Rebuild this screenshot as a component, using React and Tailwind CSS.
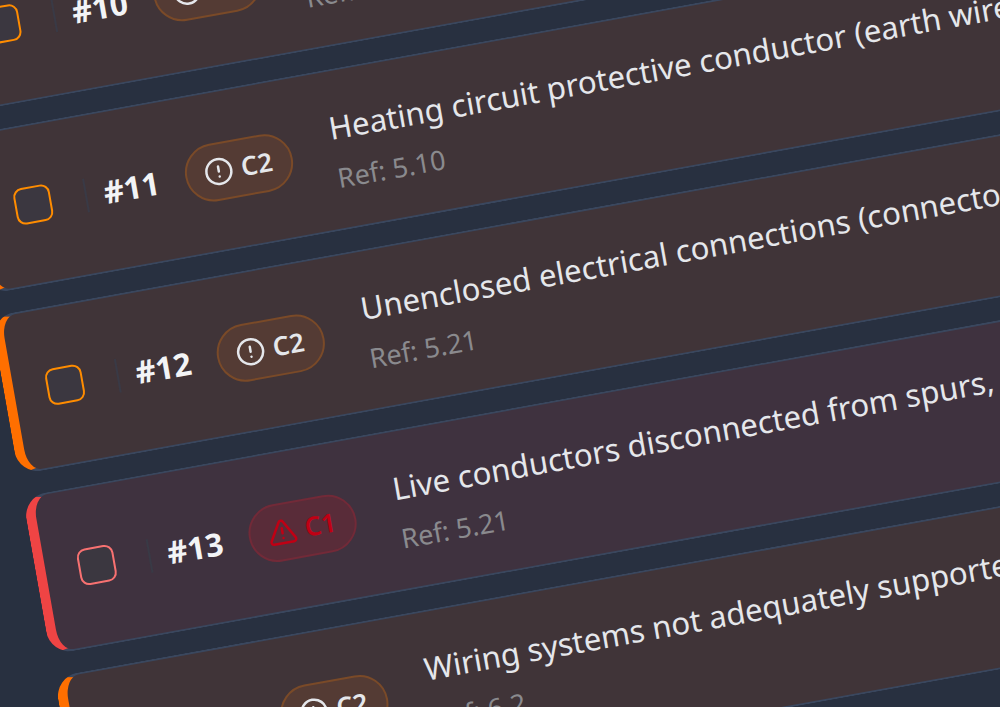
const rows = [
  { n: 10, sev: "C2", title: "Heating circuit protective conductor", ref: "Ref: 5.10" },
  { n: 11, sev: "C2", title: "Heating circuit protective conductor (earth wire)", ref: "Ref: 5.10" },
  { n: 12, sev: "C2", title: "Unenclosed electrical connections (connectors)", ref: "Ref: 5.21" },
  { n: 13, sev: "C1", title: "Live conductors disconnected from spurs,", ref: "Ref: 5.21" },
  { n: 14, sev: "C2", title: "Wiring systems not adequately supported", ref: "Ref: 6.2" },
];

function CircleAlert() {
  return (
    <svg width="30" height="30" viewBox="0 0 24 24" fill="none" stroke="#e5e7eb" strokeWidth="2" strokeLinecap="round" strokeLinejoin="round" className="shrink-0">
      <circle cx="12" cy="12" r="10" />
      <line x1="12" y1="8" x2="12" y2="12" />
      <line x1="12" y1="16" x2="12.01" y2="16" />
    </svg>
  );
}

function TriangleAlert() {
  return (
    <svg width="30" height="30" viewBox="0 0 24 24" fill="none" stroke="#c00014" strokeWidth="2" strokeLinecap="round" strokeLinejoin="round" className="shrink-0">
      <path d="m21.73 18-8-14a2 2 0 0 0-3.48 0l-8 14A2 2 0 0 0 4 21h16a2 2 0 0 0 1.73-3" />
      <path d="M12 9v4" />
      <path d="M12 17h.01" />
    </svg>
  );
}

function Row({ n, sev, title, ref: refText }) {
  const c1 = sev === "C1";
  return (
    <div
      className={
        "flex h-[161px] w-[1300px] shrink-0 items-center rounded-[24px] border-2 border-l-[10px] pl-[33px] " +
        (c1 ? "border-[#3a475e] border-l-[#ef4444] bg-[#3f323f]" : "border-[#3a475e] border-l-[#ff6f00] bg-[#403438]")
      }
    >
      <div
        className={
          "h-[37px] w-[37px] shrink-0 rounded-[9px] border-[2.5px] bg-[#3b3740] " +
          (c1 ? "border-[#f87171]" : "border-[#ff8c00]")
        }
      />
      <div className="ml-[34px] h-[34px] w-[2px] shrink-0 bg-[#393a46]" />
      <div className="ml-[17px] w-[64px] shrink-0 text-[31.5px] font-bold text-[#f3f4f6]">#{n}</div>
      <div
        className={
          "ml-[19px] flex h-[58px] w-[109px] shrink-0 items-center justify-center gap-[8px] rounded-full border-2 pr-[2px] text-[26px] font-semibold " +
          (c1
            ? "border-[#722a38] bg-[#592c39] text-[#c00014]"
            : "border-[#7a4a28] bg-[#543b34] text-[#e5e7eb]")
        }
      >
        {c1 ? <TriangleAlert /> : <CircleAlert />}
        <span>{sev}</span>
      </div>
      <div className="ml-[41px] flex flex-col gap-[15px] whitespace-nowrap pt-[2px]">
        <div className="text-[31.2px] leading-[40px] text-[#e5e7eb]">{title}</div>
        <div className="text-[27px] leading-[32px] text-[#8a8a8e]">{refText}</div>
      </div>
    </div>
  );
}

export default function App() {
  return (
    <div className="h-[707px] w-[1000px] overflow-hidden bg-[#283040] font-['Noto_Sans',sans-serif]">
      <div className="flex origin-top-left rotate-[-10deg] skew-y-[-0.25deg] flex-col gap-[22px] [translate:-73px_-44px]">
        {rows.map((r) => (
          <Row key={r.n} n={r.n} sev={r.sev} title={r.title} ref={r.ref} />
        ))}
      </div>
    </div>
  );
}
